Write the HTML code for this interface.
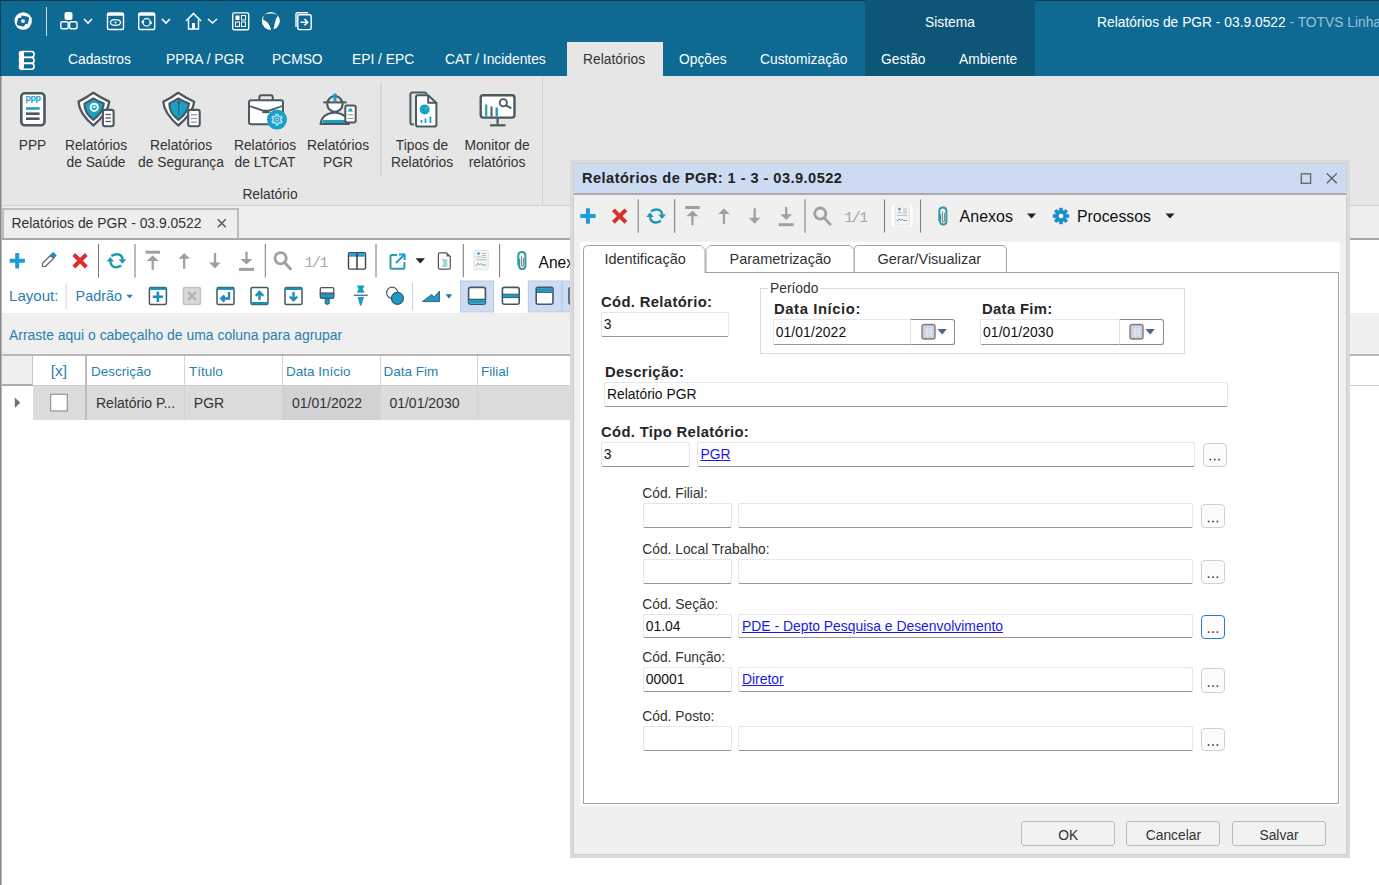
<!DOCTYPE html>
<html><head><meta charset="utf-8">
<style>
*{box-sizing:border-box;margin:0;padding:0}
html,body{width:1379px;height:885px;overflow:hidden;background:#fff;font-family:"Liberation Sans",sans-serif;color:#333}
.a{position:absolute}
.t{position:absolute;white-space:pre;line-height:1}
/* top bar */
#topbar{left:0;top:0;width:1379px;height:76px;background:#0E6A93}
#topline{left:0;top:0;width:1379px;height:1px;background:#0A3B52}
#darksec{left:865px;top:0;width:170px;height:76px;background:#0D5677}
.menu{color:#fff;font-size:13.8px;top:53px}
#acttab{left:567px;top:42px;width:96px;height:34px;background:#E6E6E6}
/* ribbon */
#ribbon{left:0;top:76px;width:1379px;height:130px;background:#E6E6E6;border-bottom:1px solid #D2D2D2}
.rl{font-size:13.8px;color:#333;text-align:center;line-height:17px}
/* doc tab bar */
#tabbar{left:0;top:206px;width:1379px;height:33px;background:#EEEEEE}
#doctab{left:2px;top:207.5px;width:237px;height:32px;background:#EEEEEE;border:2px solid #BDBDBD;border-bottom:none}
#tabline{left:0;top:238px;width:1379px;height:2px;background:#A8A8A8}
#tools{left:0;top:240px;width:1379px;height:73px;background:#fff}
#grp{left:0;top:313px;width:1379px;height:41px;background:#EFEFEF}
#hdr{left:0;top:354px;width:1379px;height:31px;background:#fff;border-top:2px solid #C8C8C8;border-bottom:1px solid #D8D8D8}
#row{left:32px;top:385px;width:1347px;height:35px;background:#DDDDDD}
#lborder{left:0;top:76px;width:2px;height:809px;background:linear-gradient(90deg,#8A8A8A 0,#8A8A8A 1px,#B4B4B4 1px,#B4B4B4 2px)}
#lborder2{left:0;top:0;width:1px;height:76px;background:#0B4560}
.gh{font-size:13.5px;color:#2A80AE;top:364.5px}
.gr{font-size:14px;color:#333;top:396.3px}
.sep{position:absolute;width:1px;background:#9A9A9A}
/* modal */
#modal{left:570px;top:160px;width:780px;height:698px;background:#F0F0F0;border:3px solid #DADADA;box-shadow:inset 0 0 0 1px #CECECE}
#mtitle{left:574px;top:164px;width:772px;height:30.8px;background:#CCDBF2;border-bottom:2.2px solid #ABABAB}
.lbl{font-size:13.8px;color:#333}
.val{font-size:13.9px;color:#111;margin-top:1px}
.lnk{color:#1A1AE6;text-decoration:underline}
.tabt{font-size:14.5px;color:#333;top:252px}
.mbtn{background:#F2F2F2;border:1px solid #B9B9B9;border-radius:3px;font-size:13.8px;color:#333;text-align:center;line-height:28.3px}
.blbl{font-size:14.8px;font-weight:bold;color:#262626}
.inp{position:absolute;background:#fff;border:1px solid #E6E6E6;border-bottom:1.8px solid #949494;border-radius:2.5px;box-shadow:0 0 0.6px rgba(0,0,0,0.12)}
.btn3{position:absolute;background:#FCFCFC;border:1px solid #CFCFCF;border-radius:4px}
</style></head><body>
<div class="a" id="topbar"></div>
<div class="a" id="topline"></div>
<div class="a" id="darksec"></div>
<div class="a" id="acttab"></div>
<svg class="a" style="left:0;top:0" width="330" height="76" viewBox="0 0 330 76" fill="none" stroke="#fff">
 <!-- logo -->
 <circle cx="23.2" cy="21" r="8.7" fill="#fff" stroke="none"/>
 <g transform="rotate(12 23.2 21)">
 <rect x="20.4" y="15.8" width="8" height="7.6" rx="1.6" fill="#0E6A93" stroke="none"/>
 <rect x="17.6" y="18.6" width="8" height="7.8" rx="1.6" fill="#0E6A93" stroke="none"/>
 <rect x="21.3" y="19.5" width="3.4" height="3.2" fill="#fff" stroke="none"/>
 </g>
 <!-- sep -->
 <line x1="46.5" y1="7" x2="46.5" y2="36" stroke="#C9DCE6" stroke-width="1"/>
 <!-- org -->
 <rect x="64.5" y="12" width="8" height="8" rx="2" fill="#fff" stroke="none"/>
 <rect x="60.8" y="21.8" width="7.4" height="7" rx="1.5" stroke-width="1.4"/>
 <rect x="69.6" y="21.8" width="7.4" height="7" rx="1.5" stroke-width="1.4"/>
 <path d="M84 19 L88 23 L92 19" stroke-width="1.6"/>
 <!-- eye window -->
 <rect x="107.5" y="13" width="16" height="16.5" rx="1.5" stroke-width="1.4"/>
 <line x1="107.5" y1="14.5" x2="123.5" y2="14.5" stroke-width="2.5"/>
 <ellipse cx="115.5" cy="22.5" rx="5" ry="2.8" stroke-width="1.2"/>
 <circle cx="115.5" cy="22.5" r="1" fill="#fff" stroke="none"/>
 <!-- refresh window -->
 <rect x="138.7" y="13" width="16" height="16.5" rx="1.5" stroke-width="1.4"/>
 <line x1="138.7" y1="14.5" x2="154.7" y2="14.5" stroke-width="2.5"/>
 <circle cx="146.7" cy="22.3" r="3.8" stroke="#D8E6EE" stroke-width="1.3"/>
 <circle cx="142.8" cy="22" r="1.4" fill="#fff" stroke="none"/>
 <circle cx="150.6" cy="22.8" r="1.4" fill="#fff" stroke="none"/>
 <path d="M162 19 L166 23 L170 19" stroke-width="1.6"/>
 <!-- home -->
 <path d="M186 21 L193.5 13.5 L201 21" stroke-width="1.6"/>
 <path d="M188.5 19.5 V29 H198.5 V19.5" stroke-width="1.4"/>
 <rect x="192" y="23" width="3" height="6" fill="#fff" stroke="none"/>
 <path d="M208 19 L212.5 23 L217 19" stroke-width="1.6"/>
 <!-- grid -->
 <rect x="232.7" y="12.9" width="16" height="16.8" rx="1.5" stroke-width="1.4"/>
 <rect x="235.5" y="15.5" width="4" height="4.5" fill="#fff" stroke="none"/>
 <rect x="241.5" y="15.5" width="4" height="4.5" stroke-width="1"/>
 <rect x="235.5" y="22" width="4" height="4.5" stroke-width="1"/>
 <rect x="241.5" y="22" width="4" height="4.5" stroke-width="1"/>
 <!-- globe -->
 <circle cx="270.8" cy="21" r="9" fill="#fff" stroke="none"/>
 <path d="M264 15 C268 13 275 13 278 15.5 L276 19 C275 22 274 26 273.5 30 L271 30 C270 25 268 22 263 19.5 Z" fill="#0E6A93" stroke="none"/>
 <!-- exit -->
 <path d="M296 27 V14.5 Q296 12.8 298 12.8 H308" stroke-width="1.4"/>
 <rect x="297.8" y="14.8" width="13.4" height="14.8" rx="1.5" stroke-width="1.4"/>
 <path d="M300.5 22.2 H307 M304.5 19 L307.7 22.2 L304.5 25.4" stroke-width="1.5"/>
 <!-- stack icon -->
 <rect x="19.5" y="51.5" width="14.5" height="5.8" rx="2.5" stroke-width="1.6"/>
 <rect x="19.5" y="57.5" width="14.5" height="5.8" rx="2.5" stroke-width="1.6"/>
 <rect x="19.5" y="63.4" width="14.5" height="5.8" rx="2.5" stroke-width="1.6"/>
 <rect x="19" y="51" width="5" height="18" rx="2" fill="#fff" stroke="none"/>
</svg>

<div class="t menu" style="left:68px">Cadastros</div>
<div class="t menu" style="left:166px">PPRA / PGR</div>
<div class="t menu" style="left:272px">PCMSO</div>
<div class="t menu" style="left:352px">EPI / EPC</div>
<div class="t menu" style="left:445px">CAT / Incidentes</div>
<div class="t menu" style="left:583px;color:#333">Relatórios</div>
<div class="t menu" style="left:679px">Opções</div>
<div class="t menu" style="left:760px">Customização</div>
<div class="t menu" style="left:881px">Gestão</div>
<div class="t menu" style="left:959px">Ambiente</div>
<div class="t menu" style="left:925px;top:15.5px">Sistema</div>
<div class="t menu" style="left:1097px;top:15.5px">Relatórios de PGR - 03.9.0522<span style="color:#9DC1D6"> - TOTVS Linha RM</span></div>

<div class="a" id="ribbon"></div>

<svg class="a" style="left:0;top:76px" width="560" height="130" viewBox="0 76 560 130">
 <g stroke="#4B5A60" fill="#fff" stroke-linejoin="round">
 <!-- PPP -->
 <rect x="21.3" y="93.3" width="23.2" height="32" rx="3.5" stroke-width="2.6"/>
 <text x="32.9" y="101.4" font-family="Liberation Sans" font-weight="bold" font-size="9" fill="#17A0C8" stroke="none" text-anchor="middle" letter-spacing="-0.5">ppp</text>
 <line x1="26" y1="108.5" x2="39.6" y2="108.5" stroke="#17A0C8" stroke-width="2.6"/>
 <line x1="26" y1="113.7" x2="39.6" y2="113.7" stroke-width="2.6"/>
 <line x1="26" y1="118.7" x2="39.6" y2="118.7" stroke-width="2.6"/>
 <!-- Shield saude -->
 <path d="M93.3 92.8 Q101 98 109.3 101.6 Q108 113 93.3 125.5 Q79 113 78.5 101.6 Q86 98 93.3 92.8 Z" stroke-width="2.3"/>
 <path d="M93.3 98.4 Q98.5 101.5 103.8 103.6 Q103 112.5 93.3 119.8 Q84 112.5 84.5 103.6 Q88.5 101.5 93.3 98.4 Z" fill="#17A0C8" stroke-width="2.2"/>
 <circle cx="94.2" cy="107.3" r="3.6" fill="none" stroke="#fff" stroke-width="2"/>
 <path d="M92.4 107 L94.2 105.6 L96 107 L94.2 108.6 Z" fill="#fff" stroke="none"/>
 <rect x="102.9" y="109.9" width="10.7" height="16.4" rx="2" stroke-width="2.1"/>
 <line x1="105.5" y1="114.5" x2="111" y2="114.5" stroke-width="1.3"/>
 <line x1="105.5" y1="118" x2="111" y2="118" stroke-width="1.3"/>
 <line x1="105.5" y1="121.5" x2="111" y2="121.5" stroke-width="1.3"/>
 <!-- Shield seguranca -->
 <path d="M178.2 92.8 Q186 98 194.2 101.8 Q193 113 178.2 125.5 Q164 113 163.3 101.8 Q171 98 178.2 92.8 Z" stroke-width="2.3"/>
 <path d="M178.4 98.4 Q183.5 101.5 189 103.6 Q188 112.5 178.4 119.8 Q169 112.5 169.4 103.6 Q173.5 101.5 178.4 98.4 Z" fill="#17A0C8" stroke-width="2.2"/>
 <circle cx="178.7" cy="102.6" r="1.7" fill="#4B5A60" stroke="none"/>
 <line x1="178.7" y1="103" x2="178.7" y2="115" stroke-width="1.2"/>
 <rect x="188.2" y="109.9" width="11.5" height="16.4" rx="2" stroke-width="2.1"/>
 <line x1="191" y1="114.7" x2="197" y2="114.7" stroke="#9BA5A9" stroke-width="1.4"/>
 <line x1="191" y1="118.5" x2="197" y2="118.5" stroke="#9BA5A9" stroke-width="1.4"/>
 <line x1="191" y1="122.2" x2="197" y2="122.2" stroke="#9BA5A9" stroke-width="1.4"/>
 <!-- Briefcase -->
 <rect x="259.4" y="95.2" width="13.4" height="6" rx="2" fill="none" stroke-width="2"/>
 <rect x="249" y="100.2" width="34" height="24" rx="2.2" stroke-width="2"/>
 <path d="M249.5 106 L263 110.7 H269 L282.5 106" fill="none" stroke-width="1.8"/>
 <rect x="262.3" y="110" width="7.2" height="3.2" fill="#4B5A60" stroke="none"/>
 <circle cx="277" cy="119.6" r="10" fill="#17A0C8" stroke="none"/>
 <path d="M275.93 115.85 L276.17 114.37 L277.83 114.37 L278.07 115.85 L279.71 116.79 L281.12 116.26 L281.95 117.70 L280.78 118.66 L280.78 120.54 L281.95 121.50 L281.12 122.94 L279.71 122.41 L278.07 123.35 L277.83 124.83 L276.17 124.83 L275.93 123.35 L274.29 122.41 L272.88 122.94 L272.05 121.50 L273.22 120.54 L273.22 118.66 L272.05 117.70 L272.88 116.26 L274.29 116.79 Z" fill="none" stroke="#C4E8F3" stroke-width="1.3" stroke-linejoin="round"/>
 <circle cx="277" cy="119.6" r="1.6" fill="none" stroke="#C4E8F3" stroke-width="1"/>
 <!-- Worker -->
 <circle cx="334.9" cy="104.2" r="7.6" stroke-width="2.2"/>
 <path d="M327.5 103.5 A7.4 7.4 0 0 1 342.3 103.5 Z" fill="#E6E6E6" stroke="none"/>
 <path d="M328 102 A7 7 0 0 1 341.8 102" fill="none" stroke-width="2.2"/>
 <line x1="335" y1="93.5" x2="335" y2="101.5" stroke="#17A0C8" stroke-width="3"/>
 <line x1="323.3" y1="102.4" x2="346.5" y2="102.4" stroke-width="2"/>
 <path d="M320.5 124 Q322 113.5 334.5 112.5 Q347 113.5 349 124 Z" stroke-width="2"/>
 <rect x="322.5" y="120" width="24.5" height="3" fill="#17A0C8" stroke="none"/>
 <rect x="345.3" y="105.6" width="10.4" height="17" rx="2" stroke-width="2"/>
 <path d="M350.3 107.5 L353 111.5 H347.5 Z" fill="#17A0C8" stroke="none"/>
 <line x1="347.5" y1="114.8" x2="353.5" y2="114.8" stroke="#8C979B" stroke-width="1"/>
 <line x1="347.5" y1="118.5" x2="353.5" y2="118.5" stroke="#8C979B" stroke-width="1"/>
 <!-- Tipos -->
 <path d="M414 124.5 H412.5 Q410.4 124.5 410.4 122.5 V94.5 Q410.4 92.5 412.5 92.5 H424.5 Q426 92.5 427 94" fill="none" stroke-width="2"/>
 <path d="M418 95.3 H428.2 L436.4 103 V124.5 Q436.4 126.6 434.3 126.6 H418 Q416 126.6 416 124.5 V97.4 Q416 95.3 418 95.3 Z" stroke-width="2"/>
 <path d="M428.2 95.5 V102.8 H436.2" fill="none" stroke-width="2"/>
 <circle cx="424.7" cy="109.4" r="5" fill="#17A0C8" stroke="none"/>
 <path d="M424.7 109.4 L428.5 106.5" stroke="#7FCBE3" stroke-width="0.8"/>
 <line x1="421.5" y1="120" x2="421.5" y2="123" stroke="#17A0C8" stroke-width="1.8"/>
 <line x1="425.5" y1="118.5" x2="425.5" y2="123" stroke="#17A0C8" stroke-width="1.8"/>
 <line x1="430.4" y1="116.5" x2="430.4" y2="123" stroke="#17A0C8" stroke-width="1.8"/>
 <!-- Monitor -->
 <rect x="480.7" y="95.2" width="33.8" height="22.4" rx="2.5" stroke-width="2.4"/>
 <line x1="497.6" y1="118.5" x2="497.6" y2="124.5" stroke-width="2.2"/>
 <line x1="490" y1="125.3" x2="505.5" y2="125.3" stroke-width="2.2"/>
 <line x1="486.2" y1="104.5" x2="486.2" y2="116.5" stroke="#16B08A" stroke-width="2.2"/>
 <line x1="491.5" y1="106.5" x2="491.5" y2="116.5" stroke-width="2"/>
 <line x1="496.7" y1="107.5" x2="496.7" y2="116.5" stroke="#17A0C8" stroke-width="2.4"/>
 <circle cx="503.3" cy="102.7" r="3.6" fill="none" stroke-width="1.9"/>
 <line x1="506" y1="105.3" x2="511.3" y2="108.3" stroke-width="2"/>
 </g>
 <line x1="381" y1="82" x2="381" y2="177" stroke="#C8C8C8"/>
 <line x1="542.5" y1="76" x2="542.5" y2="205" stroke="#D0D0D0"/>
</svg>
<div class="t rl" style="left:0;width:65px;top:137px">PPP</div>
<div class="t rl" style="left:56px;width:80px;top:137px">Relatórios
de Saúde</div>
<div class="t rl" style="left:131px;width:100px;top:137px">Relatórios
de Segurança</div>
<div class="t rl" style="left:225px;width:80px;top:137px">Relatórios
de LTCAT</div>
<div class="t rl" style="left:298px;width:80px;top:137px">Relatórios
PGR</div>
<div class="t rl" style="left:382px;width:80px;top:137px">Tipos de
Relatórios</div>
<div class="t rl" style="left:457px;width:80px;top:137px">Monitor de
relatórios</div>
<div class="t rl" style="left:230px;width:80px;top:186px">Relatório</div>
<div class="a" id="tabbar"></div>
<div class="a" id="doctab"></div>
<div class="a" id="tabline"></div>
<div class="a" id="tools"></div>
<div class="a" id="grp"></div>

<div class="a" style="left:0;top:354px;width:1379px;height:1.6px;background:#B8B8B8"></div>
<div class="a" style="left:0;top:355.6px;width:32px;height:29px;background:#EFEFEF"></div>
<div class="a" style="left:0;top:384.3px;width:33px;height:1.5px;background:#ABABAB"></div>
<div class="a" style="left:33px;top:384.8px;width:1346px;height:1px;background:#CFCFCF"></div>
<div class="a" style="left:32px;top:355.6px;width:1px;height:29px;background:#C4C4C4"></div>
<div class="a" style="left:32.5px;top:386px;width:1300px;height:34.2px;background:#DCDCDC"></div>
<div class="a" style="left:282px;top:386px;width:98px;height:34.2px;background:#D2D2D2"></div>
<div class="a" style="left:85px;top:355.6px;width:2px;height:64.6px;background:#BDBDBD"></div>
<div class="a" style="left:184px;top:355.6px;width:1px;height:64.6px;background:#D3D3D3"></div>
<div class="a" style="left:282px;top:355.6px;width:1px;height:64.6px;background:#D3D3D3"></div>
<div class="a" style="left:380px;top:355.6px;width:1px;height:64.6px;background:#D3D3D3"></div>
<div class="a" style="left:477px;top:355.6px;width:1px;height:64.6px;background:#D3D3D3"></div>
<svg class="a" style="left:0;top:390px" width="80" height="30"><path d="M14.8 7.6 L20.2 12.8 L14.8 18 Z" fill="#707070"/><rect x="50.6" y="4.3" width="16.7" height="16.7" fill="#fff" stroke="#9A9A9A" stroke-width="1.3"/></svg>
<div class="t gh" style="left:50.8px;font-size:15.5px;top:363.2px">[x]</div>
<div class="t gh" style="left:91px">Descrição</div>
<div class="t gh" style="left:189px">Título</div>
<div class="t gh" style="left:286px">Data Início</div>
<div class="t gh" style="left:383.5px">Data Fim</div>
<div class="t gh" style="left:481px">Filial</div>
<div class="t gr" style="left:96px">Relatório P...</div>
<div class="t gr" style="left:193.8px">PGR</div>
<div class="t gr" style="left:292px">01/01/2022</div>
<div class="t gr" style="left:389.4px">01/01/2030</div>
<div class="a" id="lborder"></div><div class="a" id="lborder2"></div>
<div class="t" style="left:11.5px;top:217px;font-size:13.9px;color:#333">Relatórios de PGR - 03.9.0522</div>
<svg class="a" style="left:214px;top:217px" width="14" height="14"><path d="M3.8 2.3 L11.8 10.2 M11.8 2.3 L3.8 10.2" stroke="#555" stroke-width="1.5"/></svg>
<svg class="a" style="left:0;top:240px" width="570" height="73" viewBox="0 240 570 73">
 <!-- row1 -->
 <path d="M17.2 253 V268.4 M9.6 260.7 H24.9" stroke="#1B9BD7" stroke-width="3.9"/>
 <path d="M42.4 266.5 L42.6 263.3 L50.7 255.2 L53.7 258.2 L45.6 266.3 Z" fill="#fff" stroke="#686868" stroke-width="1.25" stroke-linejoin="round"/>
 <path d="M50.4 255 L52.7 252.7 Q53.3 252.2 53.9 252.8 L56 254.9 Q56.5 255.5 56 256.1 L53.7 258.4 Z" fill="#1B8FD0" stroke="#3E6F8A" stroke-width="0.6"/>
 <path d="M73.8 254.5 L86.3 267 M86.3 254.5 L73.8 267" stroke="#D8302C" stroke-width="4"/>
 <line x1="98.5" y1="244" x2="98.5" y2="277.5" stroke="#777" stroke-width="1"/>
 <path d="M111.3 255.9 Q116.5 252.8 120.6 255.3 Q122.5 256.8 122.5 259.8" fill="none" stroke="#1E9AAE" stroke-width="2.4"/>
 <path d="M118.6 259.2 H126.3 L122.4 263.8 Z" fill="#1E9AB8"/>
 <path d="M121.2 265.5 Q116.5 268.5 112.5 266.2 Q110.3 264.3 110.3 261" fill="none" stroke="#1E9AAE" stroke-width="2.4"/>
 <path d="M106.6 261.6 H114 L110.3 256.9 Z" fill="#1E9AB8"/>
 <line x1="135" y1="244" x2="135" y2="277.5" stroke="#777" stroke-width="1"/>
 <g fill="#A0A0A0" stroke="#A0A0A0">
 <line x1="145.5" y1="252.2" x2="160" y2="252.2" stroke-width="3"/>
 <line x1="152.7" y1="258" x2="152.7" y2="269.8" stroke-width="2.3" />
 <path d="M146.8 261 L152.7 255.2 L158.6 261 Z" stroke="none"/>
 <line x1="184.2" y1="256" x2="184.2" y2="268.7" stroke-width="2.3"/>
 <path d="M178.6 258.8 L184.2 253 L189.9 258.8 Z" stroke="none"/>
 <line x1="215" y1="253" x2="215" y2="265" stroke-width="2.3"/>
 <path d="M209 262.5 L215 268.5 L220.6 262.5 Z" stroke="none"/>
 <line x1="246.5" y1="251.7" x2="246.5" y2="262" stroke-width="2.3"/>
 <path d="M240.6 259 L246.5 264.6 L252.4 259 Z" stroke="none"/>
 <line x1="239" y1="269.4" x2="254" y2="269.4" stroke-width="3"/>
 </g>
 <line x1="265.3" y1="244" x2="265.3" y2="277.5" stroke="#777" stroke-width="1"/>
 <circle cx="280.6" cy="258.3" r="5.6" fill="none" stroke="#A0A0A0" stroke-width="2.8"/>
 <line x1="284.8" y1="262.8" x2="291.2" y2="269.8" stroke="#A0A0A0" stroke-width="2.8"/>
 <text x="304.5" y="267" font-family="Liberation Mono" font-size="15" fill="#A8A8A8" letter-spacing="-1.5">1/1</text>
 <rect x="348.5" y="252.6" width="17" height="16.5" rx="1" fill="#fff" stroke="#444" stroke-width="1.4"/>
 <rect x="349.2" y="253.2" width="15.6" height="3.5" fill="#1B9BD7"/>
 <line x1="357" y1="252.6" x2="357" y2="269" stroke="#444" stroke-width="1.6"/>
 <line x1="376" y1="244" x2="376" y2="277.5" stroke="#777" stroke-width="1"/>
 <path d="M397 255 H391.5 Q390.5 255 390.5 256 V267.5 Q390.5 268.7 391.7 268.7 H403.2 Q404.4 268.7 404.4 267.5 V262" fill="none" stroke="#2E9CA8" stroke-width="2"/>
 <path d="M396 263 L403.5 255.5 M399 254.5 H404.6 V260" fill="none" stroke="#1B9BD7" stroke-width="2"/>
 <path d="M415.6 258.3 H425 L420.3 263.5 Z" fill="#222"/>
 <path d="M439 252.8 H446.5 L450.3 256.6 V268 Q450.3 269.2 449 269.2 H439.5 Q438.4 269.2 438.4 268 V253.8 Q438.4 252.8 439.5 252.8 Z" fill="#fff" stroke="#555" stroke-width="1.2"/>
 <path d="M446.5 253 L450 256.5 L446.5 256.5 Z" fill="#2A6FB0"/>
 <path d="M441.5 259 H447.3 V267 H441.5 L443.6 263 Z" fill="#A5D4D4"/>
 <line x1="463.3" y1="244" x2="463.3" y2="277.2" stroke="#777" stroke-width="1"/>
 <rect x="474" y="250.6" width="14.3" height="19" rx="1" fill="#F4F4F4" stroke="#DDD" stroke-width="0.8"/>
 <circle cx="478.5" cy="253.6" r="1.3" fill="#3F8FD0"/>
 <path d="M476.5 257 H481 M482 253.5 H486 M482 255.5 H486 M482 257.5 H486 M476 259.8 H486.5" stroke="#9AA" stroke-width="0.7"/>
 <path d="M476 266 Q478 261.5 479.5 265 Q481 262 482.5 265 H486" fill="none" stroke="#3F8FD0" stroke-width="0.8"/>
 <line x1="499.6" y1="244" x2="499.6" y2="277.2" stroke="#777" stroke-width="1"/>
 <path d="M519.2 259 V266 Q519.2 269 522.3 269 Q525.4 269 525.4 266 V255.5 Q525.4 252 522 252 Q518.3 252 518.3 255.5 V265.5" fill="none" stroke="#2D9AA4" stroke-width="2"/>
 <path d="M521.5 256 V265 Q521.5 266.3 522.5 266.3 Q523.5 266.3 523.5 265 V257.5" fill="none" stroke="#888" stroke-width="1.1"/>
 <!-- row2 -->
 <line x1="66.2" y1="283.6" x2="66.2" y2="309.5" stroke="#D6D6D6" stroke-width="1"/>
 <path d="M126.4 294.8 H133 L129.7 298.3 Z" fill="#2280B0"/>
 <g fill="none" stroke="#3E5A66" stroke-width="1.5">
 <rect x="149.4" y="287.5" width="17" height="17" rx="1.5"/>
 <rect x="149.4" y="287.5" width="17" height="2.4" fill="#1B8FB8" stroke="none"/>
 <path d="M157.9 291.5 V302 M152.8 296.7 H163" stroke="#1B8FB8" stroke-width="2.6"/>
 <rect x="183.4" y="287.5" width="17" height="17" rx="1.5" stroke="#C2C2C2" fill="#D9D9D9"/>
 <path d="M188 292 L196 300 M196 292 L188 300" stroke="#B5B5B5" stroke-width="2.5"/>
 <rect x="217" y="287.5" width="17" height="17" rx="1.5"/>
 <rect x="217" y="287.5" width="17" height="2.4" fill="#1B8FB8" stroke="none"/>
 <path d="M229 292 V298.5 H221.5 M224.5 295.5 L221.3 298.5 L224.5 301.5" stroke="#1B8FB8" stroke-width="2.4"/>
 <rect x="251" y="287.5" width="17" height="17" rx="1.5"/>
 <rect x="251" y="302" width="17" height="2.5" fill="#1B8FB8" stroke="none"/>
 <path d="M259.5 300 V292.5 M255.8 295.8 L259.5 292 L263.2 295.8" stroke="#1B8FB8" stroke-width="2.4"/>
 <rect x="285" y="287.5" width="17" height="17" rx="1.5"/>
 <rect x="285" y="287.5" width="17" height="2.5" fill="#1B8FB8" stroke="none"/>
 <path d="M293.5 292 V300 M289.8 296.5 L293.5 300.3 L297.2 296.5" stroke="#1B8FB8" stroke-width="2.4"/>
 </g>
 <g stroke="#3E5A66" stroke-width="1.3">
 <path d="M320.3 293.5 V289 Q320.3 287.6 321.7 287.6 H332.5 Q333.8 287.6 333.8 289 V293.5 Z" fill="#fff"/>
 <path d="M320.3 293.5 H333.8 V297 Q333.8 298.4 332.5 298.4 H321.7 Q320.3 298.4 320.3 297 Z" fill="#1B9BC6"/>
 <path d="M325.2 298.4 H329.2 V303.5 Q327.2 305.2 325.2 303.5 Z" fill="#1B9BC6" stroke-width="1"/>
 <circle cx="392.2" cy="292.8" r="5.6" fill="#fff" stroke-width="1.2"/>
 <circle cx="397.4" cy="298.3" r="6" fill="#1B9BC6" stroke-width="1.2"/>
 <path d="M422.5 301.6 L431.8 294.5 L434 297.4 L439.4 291 V301.6 Z" fill="#1B9BC6" stroke-width="1"/>
 </g>
 <line x1="320.5" y1="293.4" x2="333.6" y2="293.4" stroke="#5A6A70" stroke-width="1.6"/>
 <g fill="#1B9BC6">
 <path d="M356.8 285.5 H364.6 L362.8 289 L364.6 292.8 H356.8 L358.6 289 Z"/>
 <rect x="353.8" y="294.6" width="14" height="1.4" fill="#5D7480"/>
 <path d="M357.6 297 H364 L361.5 305.5 H360 Z"/>
 </g>
 <line x1="412.5" y1="283" x2="412.5" y2="310" stroke="#D0D0D0" stroke-width="1"/>
 <path d="M445.6 294.3 H452.2 L448.9 298.8 Z" fill="#1A78A8"/>
 <rect x="460.5" y="281" width="33" height="31" fill="#CDDCF3" stroke="#BACAE2" stroke-width="1"/>
 <rect x="528.3" y="281" width="33" height="31" fill="#CDDCF3" stroke="#BACAE2" stroke-width="1"/>
 <rect x="562.3" y="281" width="12" height="31" fill="#CDDCF3" stroke="#BACAE2" stroke-width="1"/>
 <g fill="none" stroke="#3E5A66" stroke-width="1.6">
 <rect x="468.6" y="287.4" width="16.8" height="16.8" rx="2" fill="#fff"/>
 <rect x="469.3" y="299.5" width="15.4" height="4" fill="#1B9BC6" stroke="none"/>
 <line x1="469" y1="299.3" x2="485" y2="299.3" stroke-width="1.2"/>
 <rect x="502.4" y="287.4" width="16.8" height="16.8" rx="2" fill="#fff"/>
 <rect x="502.4" y="294.2" width="16.8" height="3.4" fill="#1B9BC6" stroke="#3E5A66" stroke-width="1"/>
 <rect x="536.2" y="287.4" width="16.8" height="16.8" rx="2" fill="#fff"/>
 <rect x="536.9" y="288.1" width="15.4" height="3.8" fill="#1B9BC6" stroke="none"/>
 <line x1="536.6" y1="292.3" x2="552.8" y2="292.3" stroke-width="1.2"/>
 <rect x="569" y="287.4" width="16.8" height="16.8" rx="2" fill="#fff"/>
 </g>
</svg>
<div class="t" style="left:9px;top:288px;font-size:15.1px;color:#2A7FB0">Layout:</div>
<div class="t" style="left:75.6px;top:288.6px;font-size:14.4px;color:#2A7FB0">Padrão</div>
<div class="t" style="left:538.5px;top:254.5px;font-size:15.6px;color:#111">Anexos</div>
<div class="t" style="left:9px;top:328.5px;font-size:13.95px;color:#2A80AE">Arraste aqui o cabeçalho de uma coluna para agrupar</div>


<div class="a" id="modal"></div>
<div class="a" id="mtitle"></div>
<div class="t" style="left:582px;top:170.5px;font-size:14.6px;font-weight:bold;color:#222;letter-spacing:0.45px">Relatórios de PGR: 1 - 3 - 03.9.0522</div>
<svg class="a" style="left:1290px;top:164px" width="56" height="30"><rect x="11.3" y="9.8" width="9.3" height="9.5" fill="none" stroke="#6A6A6A" stroke-width="1.4"/><path d="M36.8 9.4 L46.8 19.2 M46.8 9.4 L36.8 19.2" stroke="#5A5A5A" stroke-width="1.3"/></svg>

<svg class="a" style="left:574px;top:195px" width="772" height="47" viewBox="574 195 772 47">
 <g transform="translate(570.7,-44.7)"><path d="M17.2 253 V268.4 M9.6 260.7 H24.9" stroke="#1B9BD7" stroke-width="3.9"/></g>
 <g transform="translate(539.6,-44.7)"><path d="M73.8 254.5 L86.3 267 M86.3 254.5 L73.8 267" stroke="#D8302C" stroke-width="4"/></g>
 <g transform="translate(539.7,-44.7)">
 <line x1="98.5" y1="244" x2="98.5" y2="277.5" stroke="#777" stroke-width="1"/>
 <path d="M111.3 255.9 Q116.5 252.8 120.6 255.3 Q122.5 256.8 122.5 259.8" fill="none" stroke="#1E9AAE" stroke-width="2.4"/>
 <path d="M118.6 259.2 H126.3 L122.4 263.8 Z" fill="#1E9AB8"/>
 <path d="M121.2 265.5 Q116.5 268.5 112.5 266.2 Q110.3 264.3 110.3 261" fill="none" stroke="#1E9AAE" stroke-width="2.4"/>
 <path d="M106.6 261.6 H114 L110.3 256.9 Z" fill="#1E9AB8"/>
 <line x1="135" y1="244" x2="135" y2="277.5" stroke="#777" stroke-width="1"/>
 <g fill="#A0A0A0" stroke="#A0A0A0">
 <line x1="145.5" y1="252.2" x2="160" y2="252.2" stroke-width="3"/>
 <line x1="152.7" y1="258" x2="152.7" y2="269.8" stroke-width="2.3" />
 <path d="M146.8 261 L152.7 255.2 L158.6 261 Z" stroke="none"/>
 <line x1="184.2" y1="256" x2="184.2" y2="268.7" stroke-width="2.3"/>
 <path d="M178.6 258.8 L184.2 253 L189.9 258.8 Z" stroke="none"/>
 <line x1="215" y1="253" x2="215" y2="265" stroke-width="2.3"/>
 <path d="M209 262.5 L215 268.5 L220.6 262.5 Z" stroke="none"/>
 <line x1="246.5" y1="251.7" x2="246.5" y2="262" stroke-width="2.3"/>
 <path d="M240.6 259 L246.5 264.6 L252.4 259 Z" stroke="none"/>
 <line x1="239" y1="269.4" x2="254" y2="269.4" stroke-width="3"/>
 </g>
 <line x1="265.3" y1="244" x2="265.3" y2="277.5" stroke="#777" stroke-width="1"/>
 <circle cx="280.6" cy="258.3" r="5.6" fill="none" stroke="#A0A0A0" stroke-width="2.8"/>
 <line x1="284.8" y1="262.8" x2="291.2" y2="269.8" stroke="#A0A0A0" stroke-width="2.8"/>
 <text x="304.5" y="267" font-family="Liberation Mono" font-size="15" fill="#A8A8A8" letter-spacing="-1.5">1/1</text>
 </g>
 <line x1="884.5" y1="199.5" x2="884.5" y2="232.5" stroke="#777" stroke-width="1"/>
 <g transform="translate(421,-44.5)">
 <rect x="470.6" y="249.8" width="20.9" height="21.1" fill="#fff"/>
 <rect x="474" y="250.6" width="14.3" height="19" rx="1" fill="#F4F4F4" stroke="#DDD" stroke-width="0.8"/>
 <circle cx="478.5" cy="253.6" r="1.3" fill="#3F8FD0"/>
 <path d="M476.5 257 H481 M482 253.5 H486 M482 255.5 H486 M482 257.5 H486 M476 259.8 H486.5" stroke="#9AA" stroke-width="0.7"/>
 <path d="M476 266 Q478 261.5 479.5 265 Q481 262 482.5 265 H486" fill="none" stroke="#3F8FD0" stroke-width="0.8"/>
 <line x1="499.6" y1="244" x2="499.6" y2="277.2" stroke="#777" stroke-width="1"/>
 <path d="M519.2 259 V266 Q519.2 269 522.3 269 Q525.4 269 525.4 266 V255.5 Q525.4 252 522 252 Q518.3 252 518.3 255.5 V265.5" fill="none" stroke="#2D9AA4" stroke-width="2"/>
 <path d="M521.5 256 V265 Q521.5 266.3 522.5 266.3 Q523.5 266.3 523.5 265 V257.5" fill="none" stroke="#888" stroke-width="1.1"/>
 </g>
 <path d="M1027 213.4 H1036 L1031.5 218.6 Z" fill="#222"/>
 <path d="M1165.5 213.4 H1174.5 L1170 218.6 Z" fill="#222"/>
 <g transform="translate(1061,216)">
  <circle r="6" fill="#1A8FC9"/>
  <g fill="#1A8FC9"><rect x="-1.8" y="-8.2" width="3.6" height="4"/><rect x="-1.8" y="4.2" width="3.6" height="4"/><rect x="-8.2" y="-1.8" width="4" height="3.6"/><rect x="4.2" y="-1.8" width="4" height="3.6"/>
  <rect x="-1.8" y="-8.2" width="3.6" height="4" transform="rotate(45)"/><rect x="-1.8" y="4.2" width="3.6" height="4" transform="rotate(45)"/><rect x="-8.2" y="-1.8" width="4" height="3.6" transform="rotate(45)"/><rect x="4.2" y="-1.8" width="4" height="3.6" transform="rotate(45)"/></g>
  <circle r="2.3" fill="#fff"/>
 </g>
</svg>
<div class="t" style="left:959.6px;top:209.2px;font-size:16px;color:#111">Anexos</div>
<div class="t" style="left:1077px;top:209.2px;font-size:15.85px;color:#111">Processos</div>
<div class="a" style="left:580.4px;top:242px;width:759.6px;height:564px;background:#fff"></div>
<div class="a" style="left:583px;top:271.6px;width:755.5px;height:532.8px;border:1px solid #A3A3A3"></div>
<svg class="a" style="left:580px;top:242px" width="440" height="32"><g fill="#fff" stroke="#A3A3A3" stroke-width="1"><path d="M274 30 V7.5 Q274 3.5 278 3.5 H422 Q425.5 3.5 426.5 6.5 V30.5 H274"/><path d="M126 30 V7.5 L130 3.5 H270 L274 7.5 V30.5 H126"/><path d="M3.5 31 V7.5 Q3.5 3.5 7.5 3.5 H121 L125 7.5 V31"/></g><rect x="4" y="29" width="120.5" height="3" fill="#fff"/></svg>
<div class="t tabt" style="left:604.4px">Identificação</div>
<div class="t tabt" style="left:729.5px">Parametrização</div>
<div class="t tabt" style="left:877.4px">Gerar/Visualizar</div>
<div class="a" style="left:759.5px;top:288px;width:425px;height:66.3px;border:1px solid #DCDCDC"></div>
<div class="t lbl" style="left:768px;top:281.6px;padding:0 2px;background:#fff">Período</div>
<div class="t blbl" style="left:601px;top:294.5px;letter-spacing:0.35px">Cód. Relatório:</div>
<div class="t blbl" style="left:774px;top:302.2px;letter-spacing:0.6px">Data Início:</div>
<div class="t blbl" style="left:982px;top:302.2px;letter-spacing:0.35px">Data Fim:</div>
<div class="t blbl" style="left:605px;top:364.7px;letter-spacing:0.35px">Descrição:</div>
<div class="t blbl" style="left:601px;top:425px;letter-spacing:0.35px">Cód. Tipo Relatório:</div>
<div class="inp" style="left:600.7px;top:311.7px;width:128.29999999999995px;height:25.30000000000001px"></div>
<div class="t val" style="left:603.7px;top:316.6px">3</div>
<div class="inp" style="left:772.5px;top:319px;width:182.5px;height:25.600000000000023px"></div>
<div class="a" style="left:910px;top:319px;width:45px;height:25.6px;border:1px solid #8A8A8A;border-left:1px solid #E0E0E0;border-radius:0 3px 3px 0;background:#fff"></div>
<div class="inp" style="left:980px;top:319px;width:183.79999999999995px;height:25.600000000000023px"></div>
<div class="a" style="left:1118.5px;top:319px;width:45.3px;height:25.6px;border:1px solid #8A8A8A;border-left:1px solid #E0E0E0;border-radius:0 3px 3px 0;background:#fff"></div>
<svg class="a" style="left:920.5px;top:323px" width="30" height="18"><rect x="1" y="1.5" width="13" height="14.5" rx="2" fill="#C9D1DE" stroke="#857B78" stroke-width="1.4"/><path d="M4.5 6 H11.5 M4.5 9 H11.5 M4.5 12 H11.5 M6 4 V14 M10 4 V14" stroke="#EEF1F6" stroke-width="0.8"/><path d="M16.5 6.1 H25.8 L21.15 11.5 Z" fill="#4A6491"/></svg>
<svg class="a" style="left:1129px;top:323px" width="30" height="18"><rect x="1" y="1.5" width="13" height="14.5" rx="2" fill="#C9D1DE" stroke="#857B78" stroke-width="1.4"/><path d="M4.5 6 H11.5 M4.5 9 H11.5 M4.5 12 H11.5 M6 4 V14 M10 4 V14" stroke="#EEF1F6" stroke-width="0.8"/><path d="M16.5 6.1 H25.8 L21.15 11.5 Z" fill="#4A6491"/></svg>
<div class="t val" style="left:775.7px;top:325px;letter-spacing:0.1px">01/01/2022</div>
<div class="t val" style="left:983px;top:325px;letter-spacing:0.1px">01/01/2030</div>
<div class="inp" style="left:603.7px;top:382px;width:624.3px;height:24.5px"></div>
<div class="t val" style="left:607px;top:387px">Relatório PGR</div>
<div class="inp" style="left:600.7px;top:442px;width:89.29999999999995px;height:25px"></div>
<div class="t val" style="left:603.7px;top:447px">3</div>
<div class="inp" style="left:697.4px;top:441.8px;width:497.6px;height:24.899999999999977px"></div>
<div class="t val lnk" style="left:700.4px;top:447px">PGR</div>
<div class="btn3" style="left:1203.4px;top:443.4px;width:23.399999999999864px;height:23.30000000000001px;"></div>
<svg class="a" style="left:1203.4px;top:443.4px" width="23.399999999999864" height="23.30000000000001"><g fill="#3A2F55"><rect x="6.5" y="15.8" width="1.6" height="1.6"/><rect x="10.9" y="15.8" width="1.6" height="1.6"/><rect x="15.3" y="15.8" width="1.6" height="1.6"/></g></svg>
<div class="t lbl" style="left:642.3px;top:486.7px">Cód. Filial:</div>
<div class="inp" style="left:642.5px;top:503.3px;width:89.5px;height:24.69999999999999px"></div>
<div class="inp" style="left:738.2px;top:503.3px;width:454.4000000000001px;height:24.69999999999999px"></div>
<div class="btn3" style="left:1200.7px;top:503.8px;width:24.09999999999991px;height:24.19999999999999px;"></div>
<svg class="a" style="left:1200.7px;top:503.8px" width="24.09999999999991" height="24.19999999999999"><g fill="#3A2F55"><rect x="6.8" y="16.7" width="1.6" height="1.6"/><rect x="11.2" y="16.7" width="1.6" height="1.6"/><rect x="15.6" y="16.7" width="1.6" height="1.6"/></g></svg>
<div class="t lbl" style="left:642.3px;top:543.1px">Cód. Local Trabalho:</div>
<div class="inp" style="left:642.5px;top:559px;width:89.5px;height:24.5px"></div>
<div class="inp" style="left:738.2px;top:559px;width:454.4000000000001px;height:24.5px"></div>
<div class="btn3" style="left:1200.7px;top:560.2px;width:24.09999999999991px;height:23.899999999999977px;"></div>
<svg class="a" style="left:1200.7px;top:560.2px" width="24.09999999999991" height="23.899999999999977"><g fill="#3A2F55"><rect x="6.8" y="16.4" width="1.6" height="1.6"/><rect x="11.2" y="16.4" width="1.6" height="1.6"/><rect x="15.6" y="16.4" width="1.6" height="1.6"/></g></svg>
<div class="t lbl" style="left:642.3px;top:597.6px">Cód. Seção:</div>
<div class="inp" style="left:642.5px;top:613.9px;width:89.5px;height:24.300000000000068px"></div>
<div class="inp" style="left:738.2px;top:613.9px;width:454.4000000000001px;height:24.300000000000068px"></div>
<div class="t val" style="left:645.8px;top:618.9px">01.04</div>
<div class="t val lnk" style="left:742px;top:618.9px">PDE - Depto Pesquisa e Desenvolvimento</div>
<div class="btn3" style="left:1200.7px;top:615.2px;width:24.09999999999991px;height:23.799999999999955px;border-color:#2B7BD6;border-width:1.5px"></div>
<svg class="a" style="left:1200.7px;top:615.2px" width="24.09999999999991" height="23.799999999999955"><g fill="#3A2F55"><rect x="6.8" y="16.3" width="1.6" height="1.6"/><rect x="11.2" y="16.3" width="1.6" height="1.6"/><rect x="15.6" y="16.3" width="1.6" height="1.6"/></g></svg>
<div class="t lbl" style="left:642.3px;top:651.3px">Cód. Função:</div>
<div class="inp" style="left:642.5px;top:667.3px;width:89.5px;height:24.40000000000009px"></div>
<div class="inp" style="left:738.2px;top:667.3px;width:454.4000000000001px;height:24.40000000000009px"></div>
<div class="t val" style="left:645.8px;top:672.3px">00001</div>
<div class="t val lnk" style="left:742px;top:672.3px">Diretor</div>
<div class="btn3" style="left:1200.7px;top:668px;width:24.09999999999991px;height:24.799999999999955px;"></div>
<svg class="a" style="left:1200.7px;top:668px" width="24.09999999999991" height="24.799999999999955"><g fill="#3A2F55"><rect x="6.8" y="17.3" width="1.6" height="1.6"/><rect x="11.2" y="17.3" width="1.6" height="1.6"/><rect x="15.6" y="17.3" width="1.6" height="1.6"/></g></svg>
<div class="t lbl" style="left:642.3px;top:709.6px">Cód. Posto:</div>
<div class="inp" style="left:642.5px;top:725.8px;width:89.5px;height:25.200000000000045px"></div>
<div class="inp" style="left:738.2px;top:725.8px;width:454.4000000000001px;height:25.200000000000045px"></div>
<div class="btn3" style="left:1200.7px;top:727.8px;width:24.09999999999991px;height:23.700000000000045px;"></div>
<svg class="a" style="left:1200.7px;top:727.8px" width="24.09999999999991" height="23.700000000000045"><g fill="#3A2F55"><rect x="6.8" y="16.2" width="1.6" height="1.6"/><rect x="11.2" y="16.2" width="1.6" height="1.6"/><rect x="15.6" y="16.2" width="1.6" height="1.6"/></g></svg>
<div class="a mbtn" style="left:1021.4px;top:820.8px;width:93.6px;height:25.6px">OK</div>
<div class="a mbtn" style="left:1126.4px;top:820.8px;width:94.0px;height:25.6px">Cancelar</div>
<div class="a mbtn" style="left:1232.3px;top:820.8px;width:93.4px;height:25.6px">Salvar</div>

</body></html>
